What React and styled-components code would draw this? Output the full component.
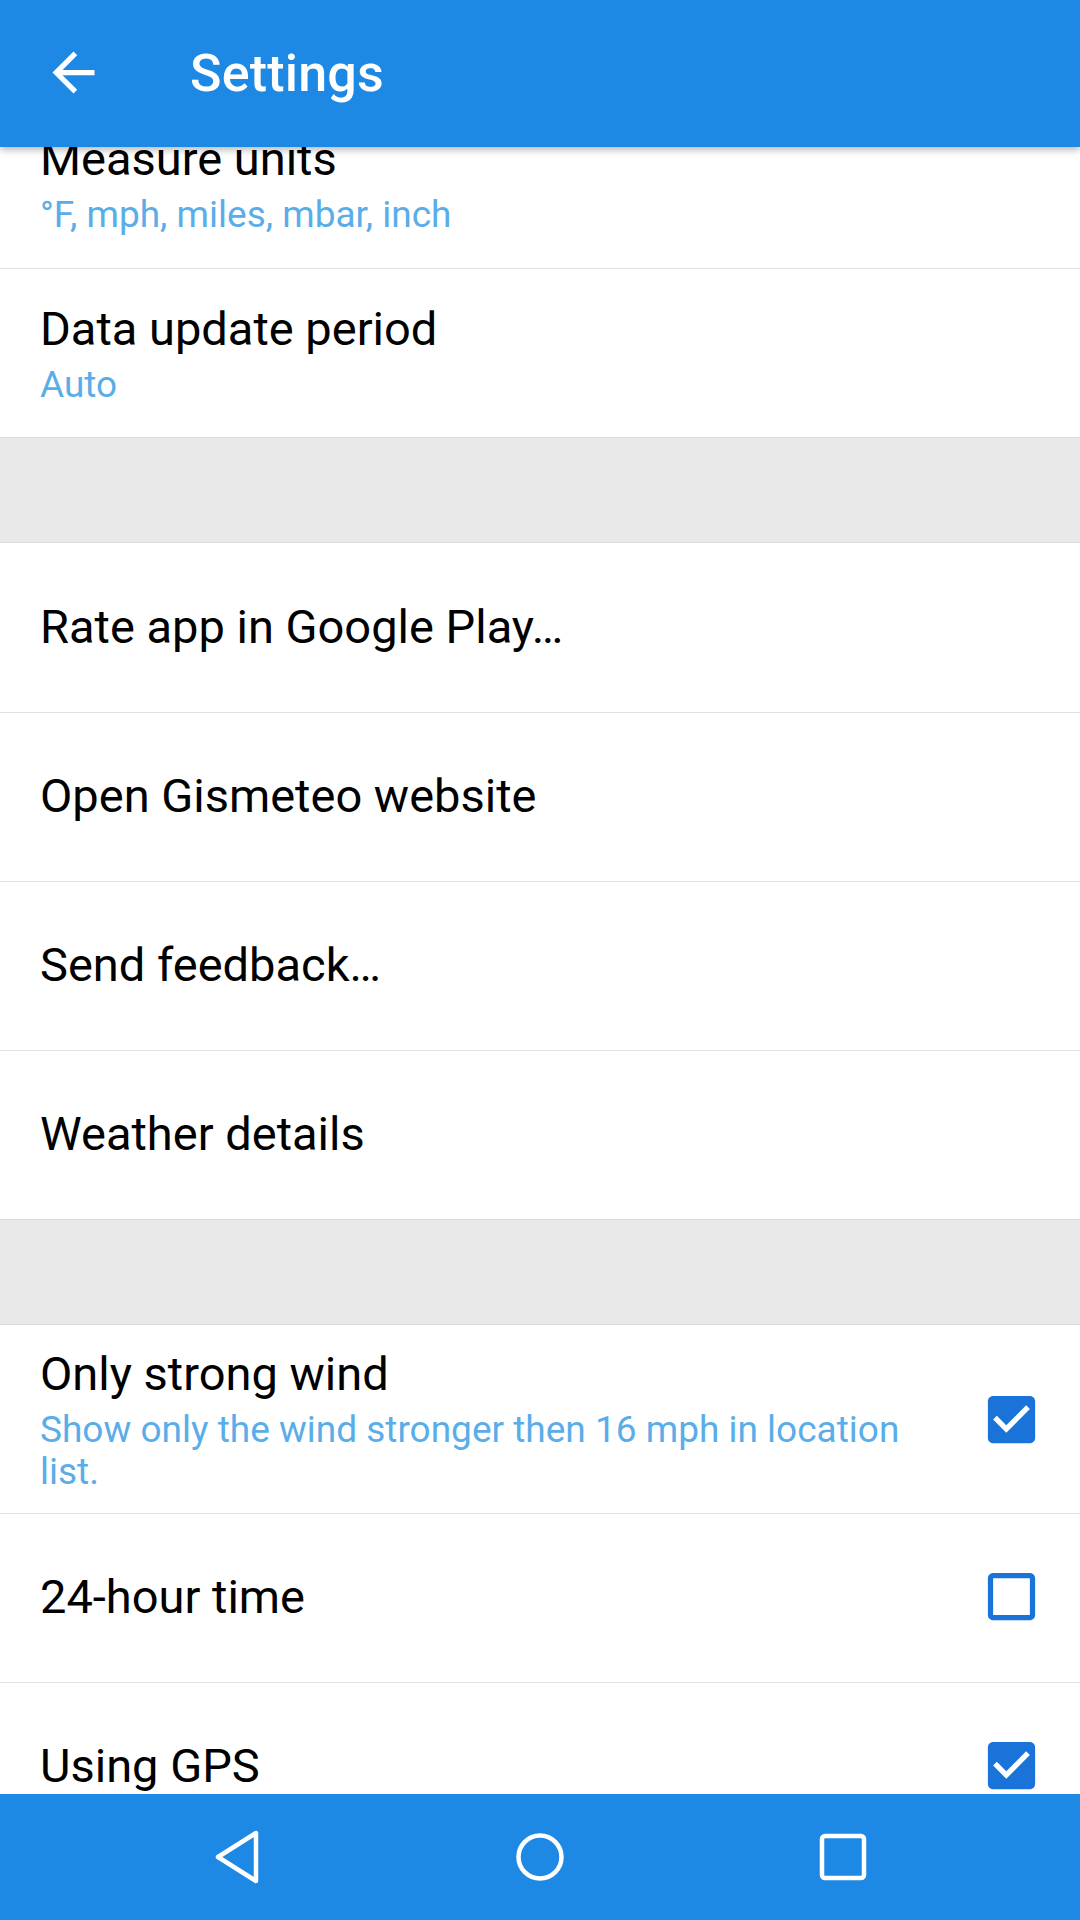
import React, { useLayoutEffect, useRef } from "react";
import styled, { createGlobalStyle } from "styled-components";

const GlobalStyle = createGlobalStyle`
  html, body {
    margin: 0;
    padding: 0;
    background: #ffffff;
  }
  body {
    font-family: Roboto, "Noto Sans", "Liberation Sans", sans-serif;
  }
  * { box-sizing: border-box; }
`;

const Screen = styled.div`
  width: 1080px;
  height: 1920px;
  display: flex;
  flex-direction: column;
  overflow: hidden;
  background: #ffffff;
`;

const AppBar = styled.header`
  position: relative;
  z-index: 2;
  flex: 0 0 147px;
  height: 147px;
  background: #1e88e5;
  display: flex;
  align-items: center;
  padding-left: 42px;
  box-shadow: 0 3px 7px rgba(0, 0, 0, 0.28);
`;

const BackButton = styled.button`
  width: 63px;
  height: 63px;
  padding: 0;
  border: none;
  background: transparent;
  display: flex;
  align-items: center;
  justify-content: center;
  margin-top: -2px;
`;

const Title = styled.h1`
  margin: 0 0 0 85px;
  color: #ffffff;
  font-family: Roboto, "Liberation Sans", sans-serif;
  font-weight: 500;
  font-size: 52px;
  line-height: 60px;
  letter-spacing: 0.2px;
`;

const Scroller = styled.main`
  flex: 1 1 auto;
  overflow-y: auto;
  scrollbar-width: none;
  &::-webkit-scrollbar { display: none; }
`;

const Section = styled.section`
  display: flex;
  flex-direction: column;
`;

const Row = styled.div`
  display: flex;
  align-items: center;
  min-height: ${(p) => (p.$tall ? 188 : 169)}px;
  padding: ${(p) => (p.$single ? "0 0 3px" : "18px 0 18px")};
  padding-left: 40px;
  padding-right: 37px;
  background: #ffffff;
  & + & {
    border-top: 1px solid #e2e2e2;
  }
`;

const Texts = styled.div`
  flex: 1 1 auto;
  min-width: 0;
  display: flex;
  flex-direction: column;
  padding-right: ${(p) => (p.$withControl ? "60px" : "0")};
`;

const RowTitle = styled.div`
  color: #000000;
  font-family: Roboto, "Liberation Sans", sans-serif;
  font-size: 47px;
  line-height: 55px;
  font-weight: 400;
`;

const RowSummary = styled.div`
  margin-top: 8px;
  color: #5aade8;
  font-family: Roboto, "Liberation Sans", sans-serif;
  font-size: 37px;
  line-height: 42px;
  font-weight: 400;
`;

const Spacer = styled.div`
  height: 106px;
  background: #e9e9e9;
  border-top: 1px solid #dcdcdc;
  border-bottom: 1px solid #dcdcdc;
`;

const CheckWrap = styled.div`
  flex: 0 0 63px;
  width: 63px;
  height: 63px;
  display: flex;
  align-items: center;
  justify-content: center;
`;

const NavBar = styled.nav`
  flex: 0 0 126px;
  height: 126px;
  background: #1e88e5;
  display: flex;
  align-items: center;
  justify-content: center;
`;

const NavButton = styled.div`
  width: 303px;
  height: 126px;
  display: flex;
  align-items: center;
  justify-content: center;
`;

const ArrowBackIcon = () => (
  <svg width="63" height="63" viewBox="0 0 24 24">
    <path
      fill="#ffffff"
      d="M20 11H7.83l5.59-5.59L12 4l-8 8 8 8 1.41-1.41L7.83 13H20v-2z"
    />
  </svg>
);

const CheckBox = ({ checked }) => (
  <CheckWrap>
    <svg width="63" height="63" viewBox="0 0 24 24">
      {checked ? (
        <path
          fill="#1a73d9"
          d="M19 3H5c-1.11 0-2 .9-2 2v14c0 1.1.89 2 2 2h14c1.11 0 2-.9 2-2V5c0-1.1-.89-2-2-2zm-9 14l-5-5 1.41-1.41L10 14.17l7.59-7.59L19 8l-9 9z"
        />
      ) : (
        <path
          fill="#1a73d9"
          d="M19 5v14H5V5h14m0-2H5c-1.1 0-2 .9-2 2v14c0 1.1.9 2 2 2h14c1.1 0 2-.9 2-2V5c0-1.1-.9-2-2-2z"
        />
      )}
    </svg>
  </CheckWrap>
);

const NavBackIcon = () => (
  <svg width="56" height="60" viewBox="0 0 56 60">
    <path
      d="M47 6 L47 54 L9 30 Z"
      fill="none"
      stroke="#ffffff"
      strokeWidth="4.5"
      strokeLinejoin="round"
    />
  </svg>
);

const NavHomeIcon = () => (
  <svg width="56" height="56" viewBox="0 0 56 56">
    <circle cx="28" cy="28" r="21.5" fill="none" stroke="#ffffff" strokeWidth="4.5" />
  </svg>
);

const NavRecentIcon = () => (
  <svg width="56" height="56" viewBox="0 0 56 56">
    <rect x="7" y="7" width="42" height="42" rx="3" fill="none" stroke="#ffffff" strokeWidth="4.5" />
  </svg>
);

const Pref = ({ title, summary, checkbox, checked, tall }) => (
  <Row $single={!summary} $tall={tall}>
    <Texts $withControl={checkbox}>
      <RowTitle>{title}</RowTitle>
      {summary && <RowSummary>{summary}</RowSummary>}
    </Texts>
    {checkbox && <CheckBox checked={checked} />}
  </Row>
);

export default function App() {
  const scrollRef = useRef(null);
  useLayoutEffect(() => {
    if (scrollRef.current) scrollRef.current.scrollTop = 48;
  }, []);

  return (
    <>
      <GlobalStyle />
      <Screen>
        <AppBar>
          <BackButton aria-label="Back">
            <ArrowBackIcon />
          </BackButton>
          <Title>Settings</Title>
        </AppBar>
        <Scroller ref={scrollRef}>
          <Section>
            <Pref title="Measure units" summary="°F, mph, miles, mbar, inch" />
            <Pref title="Data update period" summary="Auto" />
          </Section>
          <Spacer />
          <Section>
            <Pref title="Rate app in Google Play…" />
            <Pref title="Open Gismeteo website" />
            <Pref title="Send feedback…" />
            <Pref title="Weather details" />
          </Section>
          <Spacer />
          <Section>
            <Pref
              title="Only strong wind"
              summary="Show only the wind stronger then 16 mph in location list."
              checkbox
              checked
              tall
            />
            <Pref title="24-hour time" checkbox checked={false} />
            <Pref title="Using GPS" checkbox checked />
          </Section>
        </Scroller>
        <NavBar>
          <NavButton>
            <NavBackIcon />
          </NavButton>
          <NavButton>
            <NavHomeIcon />
          </NavButton>
          <NavButton>
            <NavRecentIcon />
          </NavButton>
        </NavBar>
      </Screen>
    </>
  );
}
